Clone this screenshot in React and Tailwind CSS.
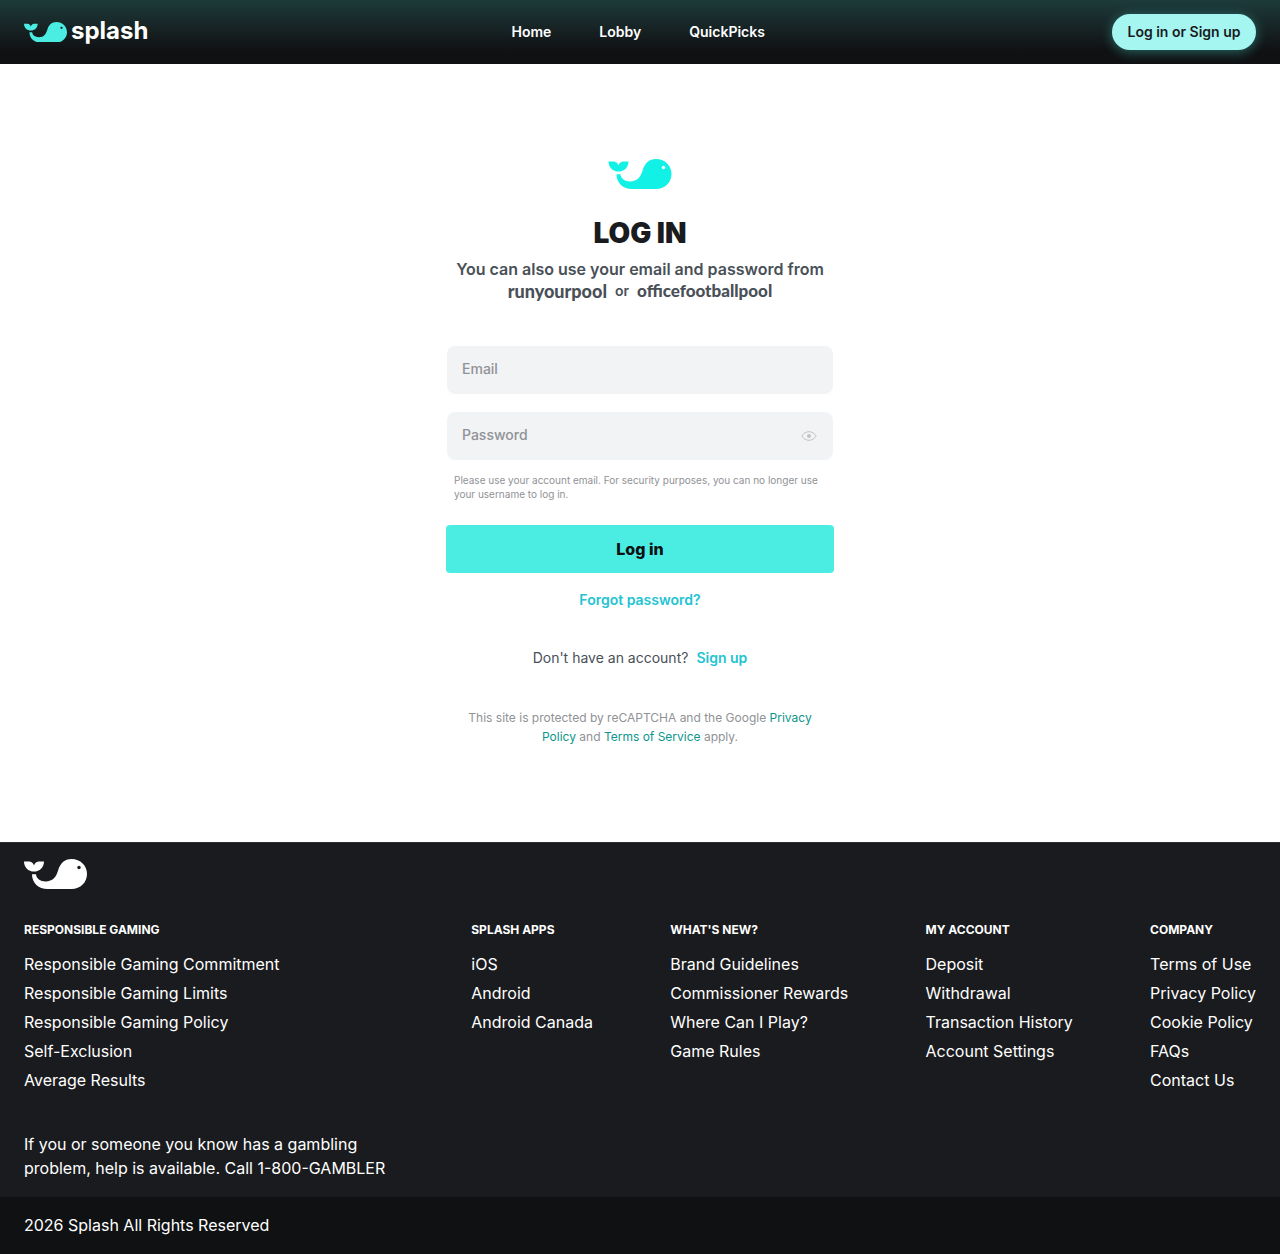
import { useState } from "react";

const navLinks = ["Home", "Lobby", "QuickPicks"];

const footerColumns = [
  { title: "Splash Apps", links: ["iOS", "Android", "Android Canada"] },
  {
    title: "What's New?",
    links: [
      "Brand Guidelines",
      "Commissioner Rewards",
      "Where Can I Play?",
      "Game Rules",
    ],
  },
  {
    title: "My Account",
    links: ["Deposit", "Withdrawal", "Transaction History", "Account Settings"],
  },
  {
    title: "Company",
    links: [
      "Terms of Use",
      "Privacy Policy",
      "Cookie Policy",
      "FAQs",
      "Contact Us",
    ],
  },
];

const responsibleLinks = [
  "Responsible Gaming Commitment",
  "Responsible Gaming Limits",
  "Responsible Gaming Policy",
  "Self-Exclusion",
  "Average Results",
];

function Whale({ className, eye }) {
  return (
    <svg viewBox="0 0 63 30" className={className} aria-hidden="true">
      <path
        fill="currentColor"
        d="M0 2.400h5.500c2.300.3 3.900 1.900 4.500 4.100.6-2.200 2.200-3.800 4.500-4.100H20c0 5.800-4.400 10.100-10 10.100S0 8.200 0 2.400z"
      />
      <path
        fill="currentColor"
        d="M8 15.200h4c.3 4.200 4.200 7.200 9.700 7.200 7 0 10.300-4 12.300-10.600C36.200 4.200 40.500 0 47.500 0 56.500 0 63 6.700 63 15s-6.500 15-15.500 15H23.500C14.500 30 8 24 8 15.200z"
      />
      <circle cx="55" cy="8.500" r="1.700" fill={eye} />
    </svg>
  );
}

function EyeIcon() {
  return (
    <svg viewBox="0 0 16 10" className="w-4 h-[10px]" aria-hidden="true">
      <path
        d="M.8 5C2.600 2.200 5.100.7 8 .7S13.400 2.200 15.200 5C13.400 7.800 10.900 9.300 8 9.300S2.600 7.800.8 5z"
        fill="none"
        stroke="currentColor"
        strokeWidth="1"
      />
      <circle cx="8" cy="5" r="2" fill="currentColor" />
    </svg>
  );
}

function FooterColumn({ title, links }) {
  return (
    <div>
      <h2 className="text-xs leading-5 font-bold uppercase">{title}</h2>
      <ul className="mt-3 flex flex-col gap-[5px]">
        {links.map((link) => (
          <li key={link}>
            <a href="#" className="block text-base leading-6 hover:underline">
              {link}
            </a>
          </li>
        ))}
      </ul>
    </div>
  );
}

export default function App() {
  const [showPassword, setShowPassword] = useState(false);

  return (
    <div className="min-h-screen flex flex-col bg-white font-['Inter',sans-serif]">
      <header className="h-16 px-6 flex items-center justify-between bg-linear-to-b from-[#1d3b3b] to-[#101113] to-80% text-white">
        <a href="#" className="flex items-center gap-1 pr-4">
          <Whale className="w-[43px] text-[#4becE2]" eye="#16211f" />
          <span className="font-bold text-2xl leading-6 pb-0.5">splash</span>
        </a>

        <nav className="flex gap-12">
          {navLinks.map((link) => (
            <a key={link} href="#" className="text-sm font-semibold">
              {link}
            </a>
          ))}
        </nav>

        <button
          type="button"
          className="w-36 h-9 rounded-full bg-[#a5f6f0] text-[#1a1b1e] text-sm font-semibold shadow-[0_2px_12px_rgba(75,236,226,0.4)]"
        >
          Log in or Sign up
        </button>
      </header>

      <main className="grow pt-[95px] pb-[92px]">
        <div className="w-full max-w-[388px] mx-auto flex flex-col items-center text-center">
          <Whale className="w-16 h-[30px] text-[#12f1e5]" eye="#ffffff" />

          <h1 className="mt-7 text-[28px] leading-8 font-black text-[#1a1b1e]">
            LOG IN
          </h1>

          <p className="mt-2 font-semibold leading-6 text-[#495057]">
            You can also use your email and password from
          </p>
          <p className="flex items-center gap-2 text-[#495057] leading-5">
            <span className="font-['Lato',sans-serif] font-black text-lg leading-5">
              runyourpool
            </span>
            <span className="text-sm font-semibold">or</span>
            <span className="font-['Lato',sans-serif] font-black text-[17px] leading-5">
              officefootballpool
            </span>
          </p>

          <form
            className="w-full mt-[45px] text-left"
            onSubmit={(event) => event.preventDefault()}
          >
            <div className="px-px">
              <input
                type="email"
                aria-label="Email"
                placeholder="Email"
                className="w-full h-12 px-[15px] pb-1 rounded-lg bg-[#f1f3f5] text-sm font-medium placeholder:text-[#909296]"
              />
              <div className="relative mt-[18px]">
                <input
                  type={showPassword ? "text" : "password"}
                  aria-label="Password"
                  placeholder="Password"
                  className="w-full h-12 pl-[15px] pr-12 pb-1 rounded-lg bg-[#f1f3f5] text-sm font-medium placeholder:text-[#909296]"
                />
                <button
                  type="button"
                  aria-label="Show password"
                  className="absolute inset-y-0 right-4 text-[#c1c2c5]"
                  onClick={() => setShowPassword(!showPassword)}
                >
                  <EyeIcon />
                </button>
              </div>
            </div>

            <p className="mt-[13px] px-2 text-[10px] leading-[14px] text-[#909296]">
              Please use your account email. For security purposes, you can no
              longer use your username to log in.
            </p>

            <button
              type="submit"
              className="mt-6 w-full h-12 rounded bg-[#4becE2] text-[#101113] text-base font-extrabold"
            >
              Log in
            </button>
          </form>

          <a href="#" className="mt-[17px] text-sm leading-5 font-semibold text-[#22c3d2]">
            Forgot password?
          </a>

          <p className="mt-[38px] flex gap-2 text-sm leading-5 text-[#495057]">
            Don't have an account?
            <a href="#" className="font-semibold text-[#22c3d2]">
              Sign up
            </a>
          </p>

          <p className="mt-10 px-3 text-xs leading-[19px] text-[#909296]">
            This site is protected by reCAPTCHA and the Google{" "}
            <a href="#" className="text-[#0c968b]">
              Privacy Policy
            </a>{" "}
            and{" "}
            <a href="#" className="text-[#0c968b]">
              Terms of Service
            </a>{" "}
            apply.
          </p>
        </div>
      </main>

      <footer className="bg-[#1a1b1e] text-white border-t border-[#2c2e33]">
        <div className="px-6 pt-4 pb-[17px]">
          <Whale className="w-[63px]" eye="#1a1b1e" />
          <div className="mt-[31px] flex justify-between">
            <div className="w-[370px]">
              <FooterColumn
                title="Responsible Gaming"
                links={responsibleLinks}
              />
              <p className="mt-10 text-base leading-6">
                If you or someone you know has a gambling problem, help is
                available. Call 1-800-GAMBLER
              </p>
            </div>
            {footerColumns.map((column) => (
              <FooterColumn key={column.title} {...column} />
            ))}
          </div>
        </div>
        <div className="px-6 pt-4 pb-[17px] bg-[#101113]">
          <p className="text-base leading-6">
            2026 Splash All Rights Reserved
          </p>
        </div>
      </footer>
    </div>
  );
}
